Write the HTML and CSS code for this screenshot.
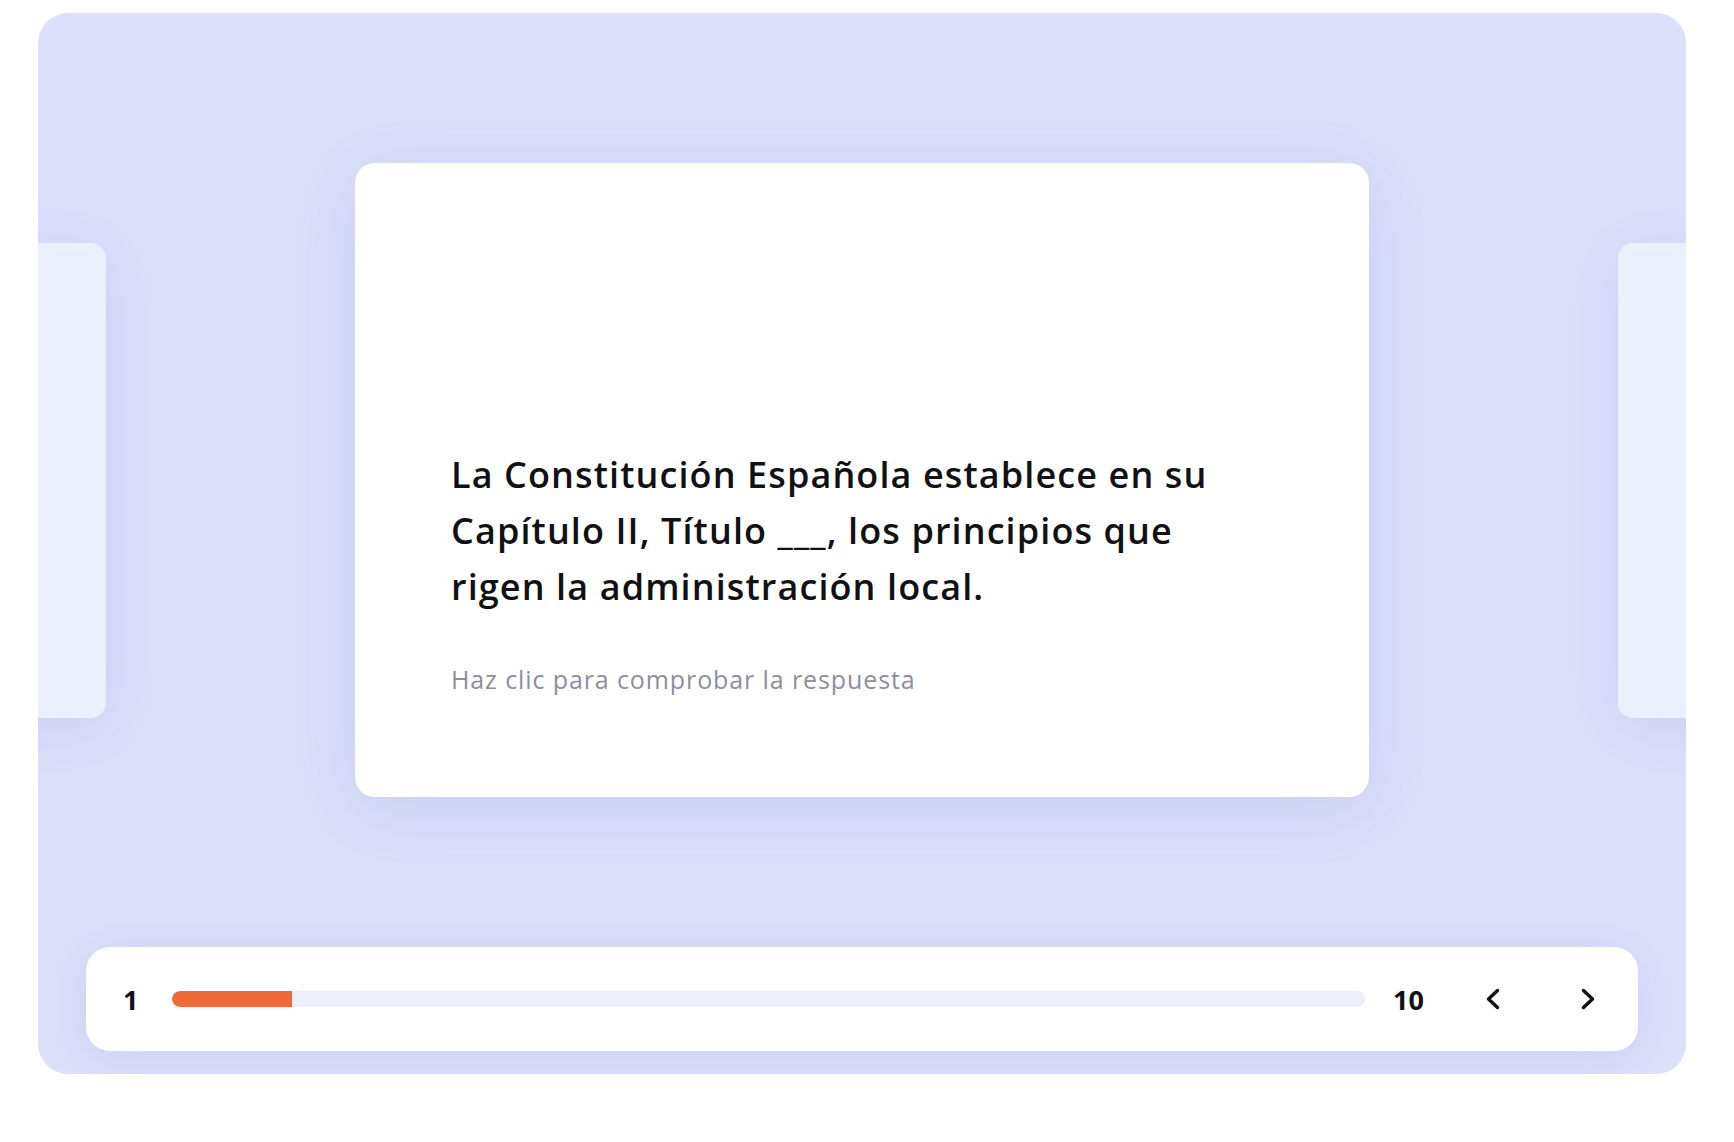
FILE: index.html
```html
<!DOCTYPE html>
<html lang="es">
<head>
<meta charset="utf-8">
<title>Flashcards</title>
<link rel="stylesheet" href="styles.css">
</head>
<body>
<div class="deck">
  <div class="stage">
    <div class="card card-side"></div>
    <div class="card card-main">
      <p class="question">La Constitución Española establece en su Capítulo II, Título ___, los principios que rigen la administración local.</p>
      <p class="hint">Haz clic para comprobar la respuesta</p>
    </div>
    <div class="card card-side"></div>
  </div>
  <div class="controls">
    <span class="count">1</span>
    <div class="track"><div class="fill" style="width:10%"></div></div>
    <span class="count total">10</span>
    <div class="nav">
      <button class="nav-btn" aria-label="Anterior">
        <svg width="14" height="22" viewBox="0 0 14 22"><polyline points="11.5,2.5 2.5,11 11.5,19.5" fill="none" stroke="#111" stroke-width="3.4" stroke-linecap="round" stroke-linejoin="round"/></svg>
      </button>
      <button class="nav-btn" aria-label="Siguiente">
        <svg width="14" height="22" viewBox="0 0 14 22"><polyline points="2.5,2.5 11.5,11 2.5,19.5" fill="none" stroke="#111" stroke-width="3.4" stroke-linecap="round" stroke-linejoin="round"/></svg>
      </button>
    </div>
  </div>
</div>
</body>
</html>
```
FILE: styles.css
```css
* { box-sizing: border-box; }
html, body { margin: 0; padding: 0; background: #ffffff; }
body {
  font-family: "Open Sans", Lato, "Liberation Sans", sans-serif;
  color: #111114;
  width: 1734px;
  height: 1142px;
  padding: 13px 48px 0 38px;
}
.deck {
  width: 1648px;
  height: 1061px;
  background: #dce0fa;
  border-radius: 30px;
  overflow: hidden;
  display: flex;
  flex-direction: column;
  padding: 150px 0 23px;
}
.stage {
  display: flex;
  justify-content: center;
  align-items: center;
  gap: 249px;
  height: 634px;
}
.card {
  flex-shrink: 0;
  border-radius: 20px;
}
.card-main {
  width: 1014px;
  height: 634px;
  background: #ffffff;
  box-shadow: 0 12px 70px rgba(120, 130, 210, 0.22);
  display: flex;
  flex-direction: column;
  justify-content: flex-end;
  padding: 0 96px 100px 96px;
}
.card-side {
  width: 760px;
  height: 475px;
  background: #eceffc;
  border-radius: 15px;
  box-shadow: 0 10px 60px rgba(120, 130, 210, 0.18);
}
.question {
  margin: 0;
  font-size: 36px;
  line-height: 56px;
  font-weight: 600;
  letter-spacing: 1.1px;
  color: #111114;
  max-width: 800px;
}
.hint {
  margin: 46px 0 0;
  font-size: 25px;
  line-height: 36px;
  letter-spacing: 0.9px;
  color: #8e8e9f;
}
.controls {
  margin: auto 48px 0;
  height: 104px;
  background: #ffffff;
  border-radius: 24px;
  box-shadow: 0 6px 40px rgba(120, 130, 210, 0.18);
  display: flex;
  align-items: center;
  padding: 0 22px 0 37px;
}
.count {
  font-size: 27px;
  font-weight: 700;
  color: #111114;
}
.track {
  flex: 1;
  height: 16px;
  margin: 0 28px 0 34px;
  background: #eceffb;
  border-radius: 8px;
  overflow: hidden;
}
.fill {
  height: 100%;
  background: #ee6b37;
  border-radius: 8px 0 0 8px;
}
.nav {
  display: flex;
  gap: 39px;
  margin-left: 41px;
}
.nav-btn {
  width: 56px;
  height: 56px;
  border: none;
  background: transparent;
  padding: 0;
  display: flex;
  align-items: center;
  justify-content: center;
  cursor: pointer;
}
```
